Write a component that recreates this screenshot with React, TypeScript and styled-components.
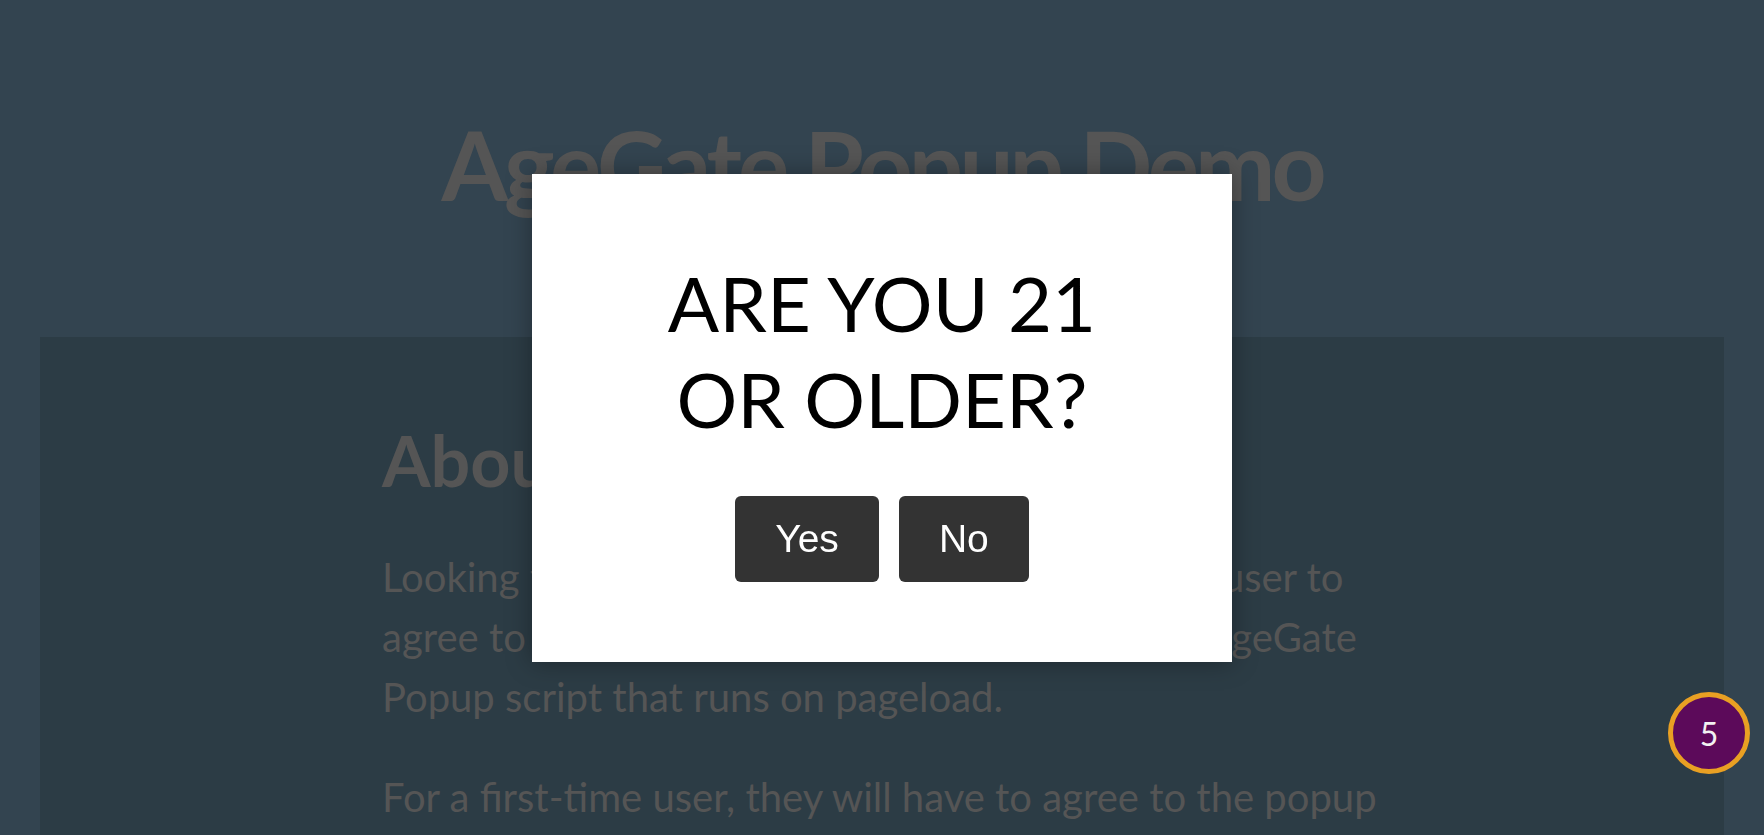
import styled, { createGlobalStyle } from 'styled-components';

const GlobalStyle = createGlobalStyle`
  html, body {
    margin: 0;
    padding: 0;
    height: 100%;
    overflow: hidden;
  }
  body {
    background: #334450;
    font-family: Lato, 'Open Sans', sans-serif;
    color: #555555;
  }
`;

const Page = styled.div`
  min-height: 100vh;
`;

const Header = styled.header`
  padding: 104px 0 113px;
  text-align: center;
`;

const Title = styled.h1`
  margin: 0;
  font-size: 96px;
  line-height: 120px;
  font-weight: 700;
  letter-spacing: -4px;
  color: #555555;
`;

const Panel = styled.main`
  margin: 0 40px;
  background: #2c3c45;
  padding: 81px 0 80px;
`;

const Content = styled.section`
  max-width: 1000px;
  margin: 0 auto;
`;

const SectionTitle = styled.h2`
  margin: 0 0 45px;
  font-size: 70px;
  line-height: 1.2;
  font-weight: 700;
`;

const Paragraph = styled.p`
  margin: 0 0 40px;
  font-size: 40px;
  line-height: 60px;
`;

const Backdrop = styled.div`
  position: fixed;
  inset: 0;
  display: flex;
  align-items: center;
  justify-content: center;
`;

const Modal = styled.div`
  width: 700px;
  box-sizing: border-box;
  padding: 81px 0 80px;
  background: #ffffff;
  box-shadow: 0 0 24px rgba(0, 0, 0, 0.35);
  text-align: center;
`;

const Question = styled.h3`
  margin: 0 0 49px;
  font-family: Lato, sans-serif;
  font-size: 76px;
  line-height: 96px;
  font-weight: 400;
  color: #000000;
  text-transform: uppercase;
`;

const Actions = styled.div`
  display: flex;
  justify-content: center;
  gap: 20px;
`;

const Button = styled.button`
  padding: 22px 40px;
  border: none;
  border-radius: 6px;
  background: #333333;
  color: #ffffff;
  font-family: 'Liberation Sans', Arial, sans-serif;
  font-size: 39px;
  line-height: 42px;
  cursor: pointer;
`;

const Badge = styled.div`
  position: fixed;
  right: 14px;
  bottom: 61px;
  width: 82px;
  height: 82px;
  box-sizing: border-box;
  border: 5px solid #e9a023;
  border-radius: 50%;
  background: #5c0a5a;
  color: #f2f2f2;
  display: flex;
  align-items: center;
  justify-content: center;
  font-family: Lato, sans-serif;
  font-size: 32px;
`;

export default function App() {
  return (
    <>
      <GlobalStyle />
      <Page>
        <Header>
          <Title>AgeGate Popup Demo</Title>
        </Header>
        <Panel>
          <Content>
            <SectionTitle>About AgeGate Popup</SectionTitle>
            <Paragraph>
              Looking for a simple way to require any website user to agree to your terms
              before access? Try out this AgeGate Popup script that runs on pageload.
            </Paragraph>
            <Paragraph>
              For a first-time user, they will have to agree to the popup before they can see
              the site content. Returning users will not see it again.
            </Paragraph>
          </Content>
        </Panel>
      </Page>
      <Backdrop>
        <Modal>
          <Question>
            Are you 21
            <br />
            or older?
          </Question>
          <Actions>
            <Button>Yes</Button>
            <Button>No</Button>
          </Actions>
        </Modal>
      </Backdrop>
      <Badge>5</Badge>
    </>
  );
}
